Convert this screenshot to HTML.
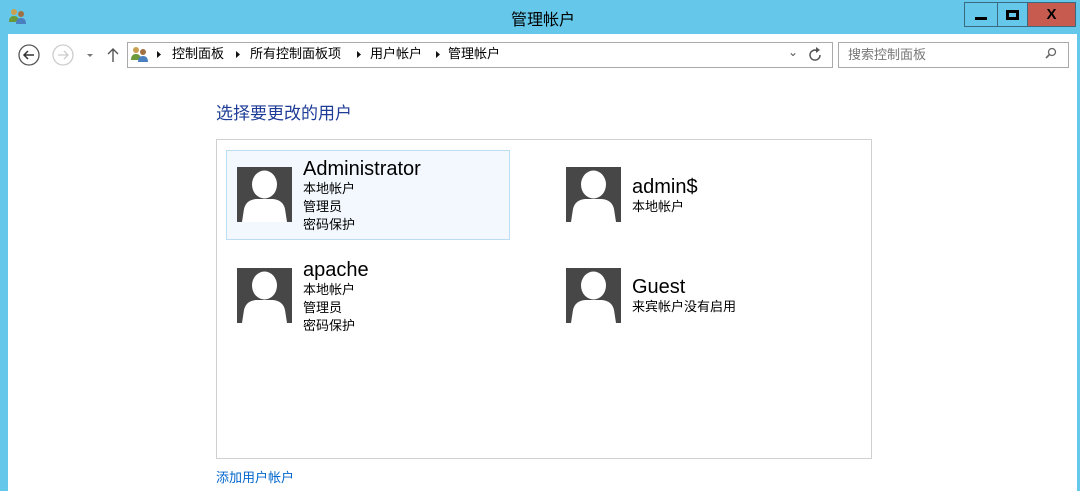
<!DOCTYPE html><html><head><meta charset="utf-8"><style>
*{margin:0;padding:0;box-sizing:border-box}
body{width:1080px;height:491px;background:#65c8ea;position:relative;overflow:hidden;font-family:"Liberation Sans","Noto Sans CJK SC",sans-serif;font-size:13px;color:#000}
.a{position:absolute}
.main{left:8px;top:34px;width:1069px;height:457px;background:#fff}
.btn{top:2px;height:25px;border:1px solid #3a6a80;display:flex;align-items:center;justify-content:center}
.nm{font-size:20px;line-height:22px}
.sub{font-size:13px;line-height:18px}
.bc{top:45px;font-size:13px;line-height:18px;white-space:nowrap}
</style></head><body>
<svg class="a" style="left:9px;top:8px" width="18" height="16"><circle cx="5" cy="4" r="3" fill="#c8a050"/><path d="M0 14 Q0 8 5 8 Q10 8 10 14Z" fill="#6a9a3a"/><circle cx="12" cy="6" r="3" fill="#a07040"/><path d="M7 16 Q7 10 12 10 Q17 10 17 16Z" fill="#4a80c0"/></svg>
<div class="a" style="left:0;top:6px;width:1086px;text-align:center;font-size:16px">管理帐户</div>
<div class="a btn" style="left:964px;width:34px;background:#65c8ea"><div style="width:12px;height:3px;background:#000;margin-top:8px"></div></div>
<div class="a btn" style="left:997px;width:31px;background:#65c8ea"><div style="width:13px;height:10px;border:3px solid #000"></div></div>
<div class="a btn" style="left:1027px;width:49px;background:#c75b50;font-weight:bold;font-size:15px">X</div>
<div class="a main"></div>
<svg class="a" style="left:18px;top:44px" width="80" height="22"><circle cx="11" cy="11" r="10" fill="none" stroke="#555" stroke-width="1.3"/><path d="M16 11H6M10 7L6 11L10 15" stroke="#333" stroke-width="1.5" fill="none"/><circle cx="45" cy="11" r="10" fill="none" stroke="#ccc" stroke-width="1.3"/><path d="M40 11H50M46 7L50 11L46 15" stroke="#ccc" stroke-width="1.3" fill="none"/><path d="M69 10L72 13L75 10Z" fill="#777"/></svg>
<svg class="a" style="left:106px;top:47px" width="14" height="16"><path d="M7 15V2M2 7L7 2L12 7" stroke="#555" stroke-width="1.4" fill="none"/></svg>
<div class="a" style="left:127px;top:42px;width:706px;height:26px;border:1px solid #aaa"></div>
<svg class="a" style="left:131px;top:46px" width="18" height="16"><circle cx="5" cy="4" r="3" fill="#c8a050"/><path d="M0 14 Q0 8 5 8 Q10 8 10 14Z" fill="#6a9a3a"/><circle cx="12" cy="6" r="3" fill="#a07040"/><path d="M7 16 Q7 10 12 10 Q17 10 17 16Z" fill="#4a80c0"/></svg>
<svg class="a" style="left:0;top:0" width="1080" height="80"><path d="M157 51L161 54.5L157 58Z M236 51L240 54.5L236 58Z M357 51L361 54.5L357 58Z M436 51L440 54.5L436 58Z" fill="#111"/></svg>
<div class="a bc" style="left:172px">控制面板</div>
<div class="a bc" style="left:250px">所有控制面板项</div>
<div class="a bc" style="left:370px">用户帐户</div>
<div class="a bc" style="left:448px">管理帐户</div>
<div class="a" style="left:788px;top:45px;color:#555;font-size:12px">⌄</div>
<svg class="a" style="left:809px;top:47px" width="14" height="16"><path d="M11 8A5 5 0 1 1 8 3.5" stroke="#555" stroke-width="1.5" fill="none"/><path d="M7 0L11 3L7 6Z" fill="#555"/></svg>
<div class="a" style="left:838px;top:42px;width:231px;height:26px;border:1px solid #aaa;color:#777;padding:4px 9px;line-height:16px">搜索控制面板</div>
<svg class="a" style="left:1044px;top:47px" width="14" height="14"><circle cx="8" cy="5" r="3.5" fill="none" stroke="#666" stroke-width="1.3"/><path d="M5.5 7.5L2 11" stroke="#666" stroke-width="1.6"/></svg>
<div class="a" style="left:216px;top:99px;font-size:17px;color:#1e3c96">选择要更改的用户</div>
<div class="a" style="left:216px;top:139px;width:656px;height:320px;border:1px solid #d0d0d0"></div>
<div class="a" style="left:226px;top:150px;width:284px;height:90px;background:#f2f8fe;border:1px solid #bcdcf4"></div>
<svg width="0" height="0" style="position:absolute"><defs><g id="p"><rect width="55" height="55" fill="#474747"/><ellipse cx="27.5" cy="17.5" rx="12.5" ry="14" fill="#fff"/><path d="M5 55 L7 42 Q9 33 19 32 L36 32 Q46 33 48 42 L50 55Z" fill="#fff"/></g></defs></svg>
<svg class="a" style="left:237px;top:167px" width="55" height="55"><use href="#p"/></svg>
<div class="a" style="left:303px;top:158px"><div class="nm">Administrator</div><div class="sub">本地帐户<br>管理员<br>密码保护</div></div>
<svg class="a" style="left:566px;top:167px" width="55" height="55"><use href="#p"/></svg>
<div class="a" style="left:632px;top:176px"><div class="nm">admin$</div><div class="sub">本地帐户</div></div>
<svg class="a" style="left:237px;top:268px" width="55" height="55"><use href="#p"/></svg>
<div class="a" style="left:303px;top:259px"><div class="nm">apache</div><div class="sub">本地帐户<br>管理员<br>密码保护</div></div>
<svg class="a" style="left:566px;top:268px" width="55" height="55"><use href="#p"/></svg>
<div class="a" style="left:632px;top:276px"><div class="nm">Guest</div><div class="sub">来宾帐户没有启用</div></div>
<div class="a" style="left:216px;top:467px;font-size:13px;color:#0066cc">添加用户帐户</div>
</body></html>
